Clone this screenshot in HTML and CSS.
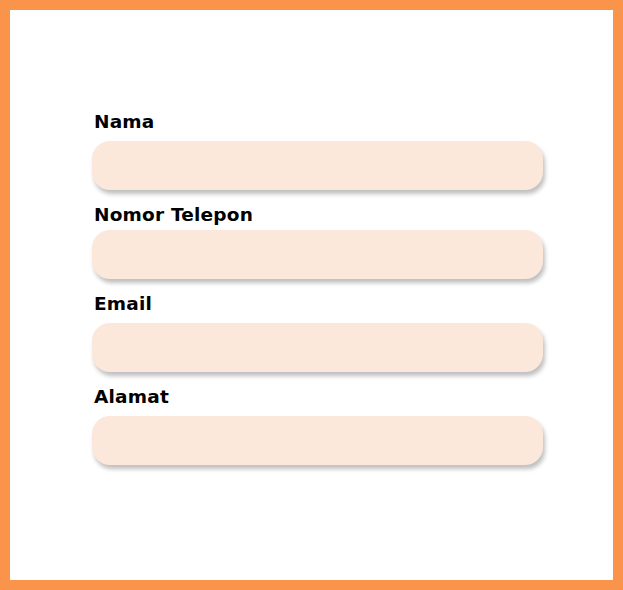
FILE: index.html
```html
<!DOCTYPE html>
<html lang="id">
<head>
<meta charset="utf-8">
<title>Form</title>
<link rel="stylesheet" href="styles.css">
</head>
<body>
<div class="frame">
  <form class="form">
    <div class="field">
      <label class="label" for="nama">Nama</label>
      <input class="input" id="nama" type="text">
    </div>
    <div class="field field--tight">
      <label class="label" for="telp">Nomor Telepon</label>
      <input class="input" id="telp" type="tel">
    </div>
    <div class="field">
      <label class="label" for="email">Email</label>
      <input class="input" id="email" type="email">
    </div>
    <div class="field">
      <label class="label" for="alamat">Alamat</label>
      <input class="input" id="alamat" type="text">
    </div>
  </form>
</div>
</body>
</html>
```
FILE: styles.css
```css
html, body {
  margin: 0;
  padding: 0;
  background: #ffffff;
}
.frame {
  box-sizing: border-box;
  width: 623px;
  height: 590px;
  border: 10px solid #fa944a;
  background: #ffffff;
  padding: 102px 0 0 82px;
}
.form {
  display: flex;
  flex-direction: column;
  gap: 15px;
  width: 451px;
}
.field {
  display: flex;
  flex-direction: column;
  gap: 9px;
}
.field--tight {
  gap: 5px;
}
.label {
  display: block;
  padding-left: 2px;
  font-family: "DejaVu Sans", Inter, sans-serif;
  font-weight: 700;
  font-size: 18.5px;
  letter-spacing: 0.2px;
  line-height: 20px;
  color: #000000;
}
.input {
  box-sizing: border-box;
  width: 451px;
  height: 49px;
  border: none;
  outline: none;
  border-radius: 18px;
  background: #fce8da;
  box-shadow: 2px 4px 4px rgba(0, 0, 0, 0.25);
  padding: 0 16px;
  font-family: Inter, sans-serif;
  font-size: 16px;
}
```
